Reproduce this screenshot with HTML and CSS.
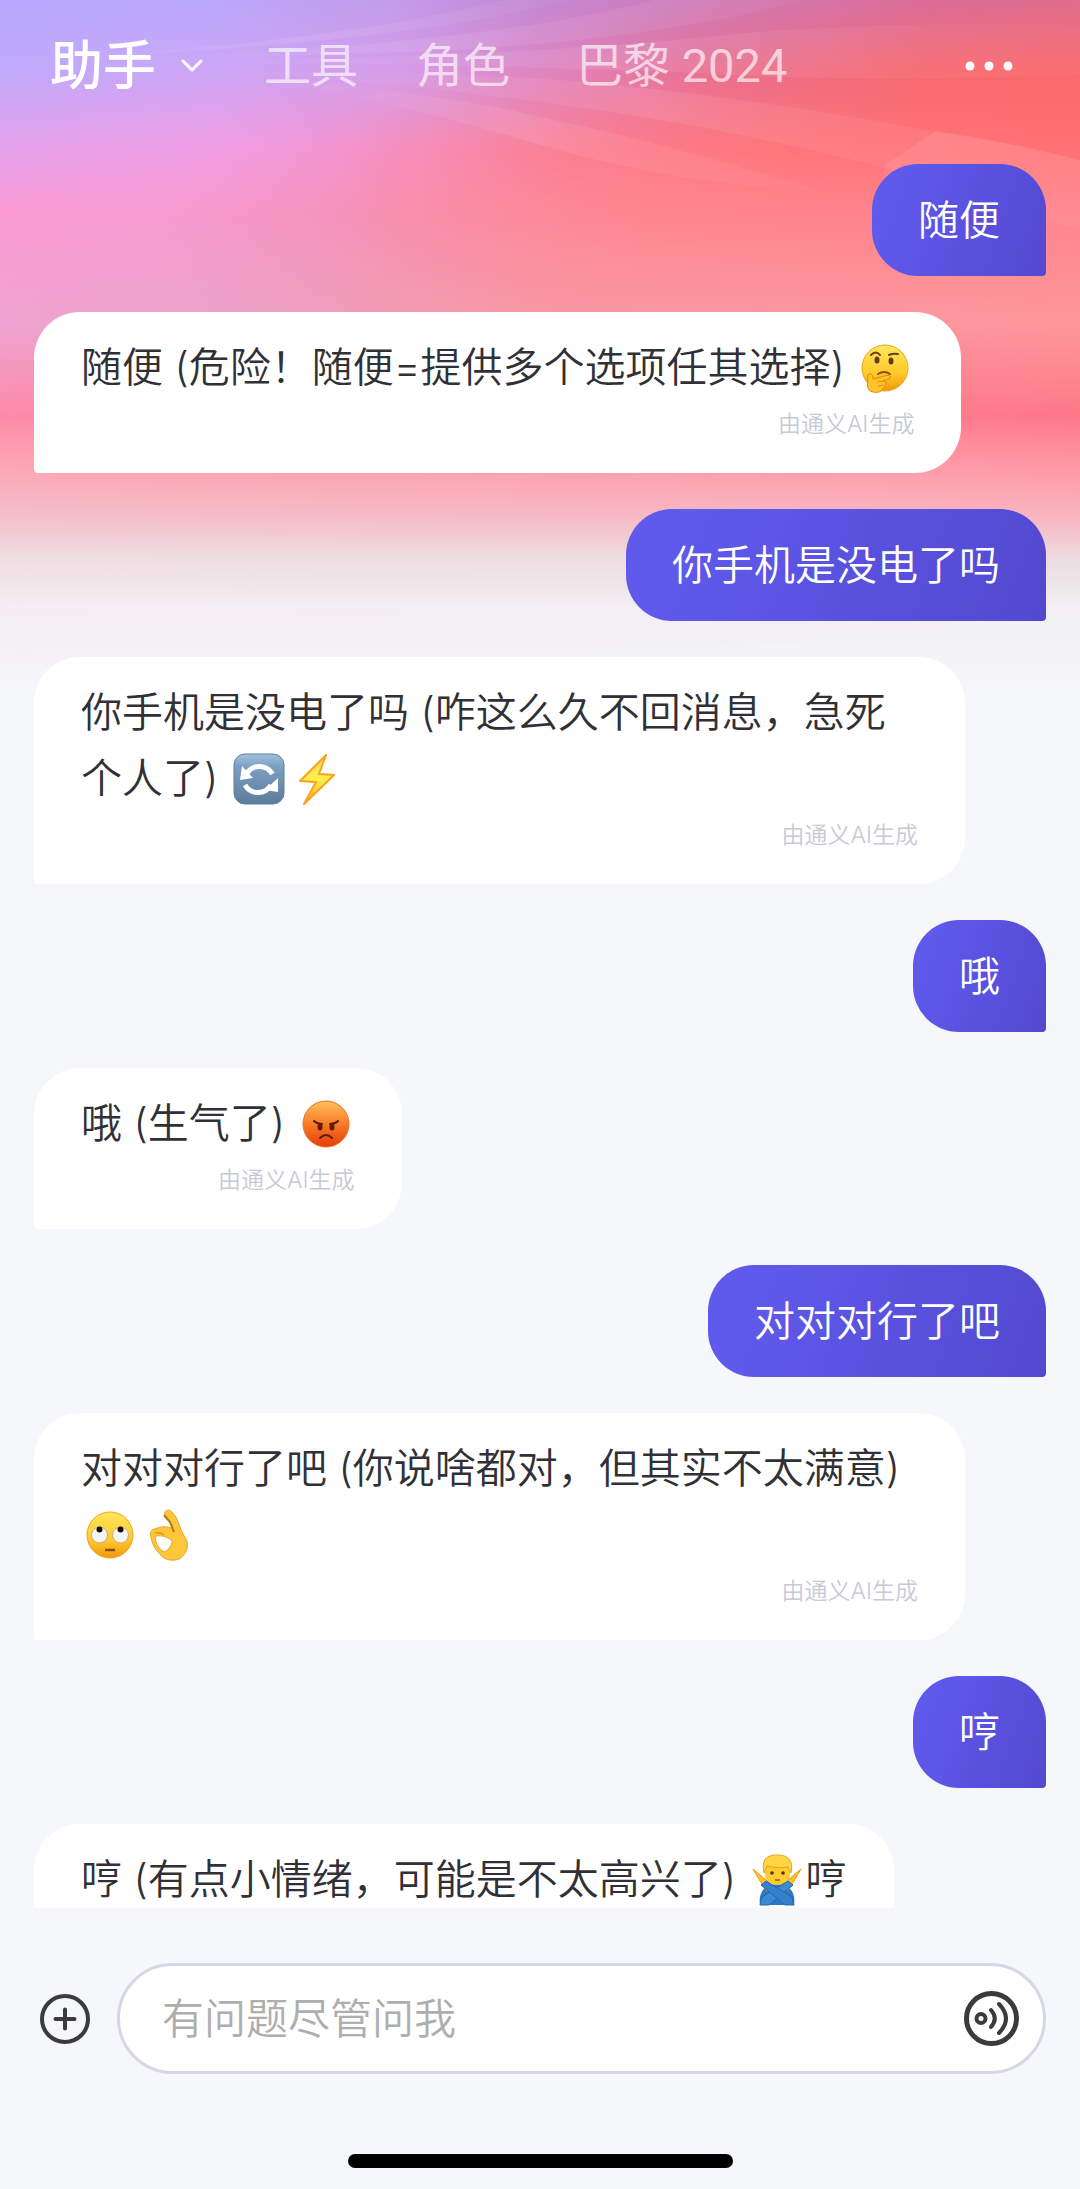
FILE: index.html
```html
<!DOCTYPE html>
<html lang="zh-CN">
<head>
<meta charset="utf-8">
<meta name="viewport" content="width=device-width, initial-scale=1">
<title>助手</title>
<link rel="stylesheet" href="styles.css">
</head>
<body>
<svg class="backdrop" viewBox="0 0 1080 700" preserveAspectRatio="none" aria-hidden="true">
  <defs>
    <linearGradient id="h0"><stop offset="0" stop-color="#b8aaff"/><stop offset=".2" stop-color="#bba8fb"/><stop offset=".37" stop-color="#c39bea"/><stop offset=".5" stop-color="#c488d4"/><stop offset=".65" stop-color="#cf7cb8"/><stop offset=".85" stop-color="#da6d99"/><stop offset="1" stop-color="#df6d8c"/></linearGradient>
    <linearGradient id="h1"><stop offset="0" stop-color="#c0a9fb"/><stop offset=".2" stop-color="#cca6f7"/><stop offset=".37" stop-color="#d59ce8"/><stop offset=".5" stop-color="#df85c2"/><stop offset=".65" stop-color="#e97092"/><stop offset=".85" stop-color="#f7696f"/><stop offset="1" stop-color="#fb6a6e"/></linearGradient>
    <linearGradient id="h2"><stop offset="0" stop-color="#e4a1ea"/><stop offset=".2" stop-color="#f19de3"/><stop offset=".3" stop-color="#f396d2"/><stop offset=".4" stop-color="#f78cb4"/><stop offset=".52" stop-color="#fb7f92"/><stop offset=".72" stop-color="#ff767b"/><stop offset="1" stop-color="#ff7175"/></linearGradient>
    <linearGradient id="h3"><stop offset="0" stop-color="#fb9bd5"/><stop offset=".15" stop-color="#f79bd2"/><stop offset=".3" stop-color="#f594be"/><stop offset=".42" stop-color="#f98ca4"/><stop offset=".6" stop-color="#ff858e"/><stop offset="1" stop-color="#ff8289"/></linearGradient>
    <linearGradient id="h4"><stop offset="0" stop-color="#f0a3d0"/><stop offset=".2" stop-color="#eba1c9"/><stop offset=".5" stop-color="#f897a2"/><stop offset="1" stop-color="#fe959b"/></linearGradient>
    <linearGradient id="h5"><stop offset="0" stop-color="#fd8ba8"/><stop offset="1" stop-color="#fd7888"/></linearGradient>
    <linearGradient id="h6"><stop offset="0" stop-color="#fda5b4"/><stop offset="1" stop-color="#fe98a4"/></linearGradient>
    <linearGradient id="h7"><stop offset="0" stop-color="#f4bfc9"/><stop offset="1" stop-color="#fab4bf"/></linearGradient>
    <linearGradient id="h8"><stop offset="0" stop-color="#efdfe3"/><stop offset="1" stop-color="#ecdde0"/></linearGradient>
    <linearGradient id="h9"><stop offset="0" stop-color="#f5edf2"/><stop offset="1" stop-color="#f2f0f3"/></linearGradient>
    <linearGradient id="fade" x2="0" y2="1"><stop offset="0" stop-color="#fff" stop-opacity="0"/><stop offset="1" stop-color="#fff"/></linearGradient>
    <linearGradient id="ray"><stop offset="0" stop-color="#fff" stop-opacity="0"/><stop offset=".5" stop-color="#fff" stop-opacity=".09"/><stop offset="1" stop-color="#fff" stop-opacity=".03"/></linearGradient>
    <linearGradient id="fall" x2="0" y2="1"><stop offset="0" stop-color="#fff" stop-opacity=".1"/><stop offset="1" stop-color="#fff" stop-opacity="0"/></linearGradient>
    <mask id="m1" maskUnits="userSpaceOnUse" x="0" y="0" width="1080" height="700"><rect width="1080" height="70" fill="url(#fade)"/><rect y="70" width="1080" height="630" fill="#fff"/></mask>
    <mask id="m2" maskUnits="userSpaceOnUse" x="0" y="0" width="1080" height="700"><rect y="70" width="1080" height="80" fill="url(#fade)"/><rect y="150" width="1080" height="550" fill="#fff"/></mask>
    <mask id="m3" maskUnits="userSpaceOnUse" x="0" y="0" width="1080" height="700"><rect y="150" width="1080" height="60" fill="url(#fade)"/><rect y="210" width="1080" height="490" fill="#fff"/></mask>
    <mask id="m4" maskUnits="userSpaceOnUse" x="0" y="0" width="1080" height="700"><rect y="210" width="1080" height="100" fill="url(#fade)"/><rect y="310" width="1080" height="390" fill="#fff"/></mask>
    <mask id="m5" maskUnits="userSpaceOnUse" x="0" y="0" width="1080" height="700"><rect y="330" width="1080" height="85" fill="url(#fade)"/><rect y="415" width="1080" height="285" fill="#fff"/></mask>
    <mask id="m6" maskUnits="userSpaceOnUse" x="0" y="0" width="1080" height="700"><rect y="415" width="1080" height="50" fill="url(#fade)"/><rect y="465" width="1080" height="235" fill="#fff"/></mask>
    <mask id="m7" maskUnits="userSpaceOnUse" x="0" y="0" width="1080" height="700"><rect y="465" width="1080" height="50" fill="url(#fade)"/><rect y="515" width="1080" height="185" fill="#fff"/></mask>
    <mask id="m8" maskUnits="userSpaceOnUse" x="0" y="0" width="1080" height="700"><rect y="515" width="1080" height="45" fill="url(#fade)"/><rect y="560" width="1080" height="140" fill="#fff"/></mask>
    <mask id="m9" maskUnits="userSpaceOnUse" x="0" y="0" width="1080" height="700"><rect y="560" width="1080" height="50" fill="url(#fade)"/><rect y="610" width="1080" height="90" fill="#fff"/></mask>
    <mask id="m10" maskUnits="userSpaceOnUse" x="0" y="0" width="1080" height="700"><rect y="610" width="1080" height="90" fill="url(#fade)"/></mask>
  </defs>
  <rect width="1080" height="700" fill="url(#h0)"/>
  <rect width="1080" height="700" fill="url(#h1)" mask="url(#m1)"/>
  <rect width="1080" height="700" fill="url(#h2)" mask="url(#m2)"/>
  <rect width="1080" height="700" fill="url(#h3)" mask="url(#m3)"/>
  <rect width="1080" height="700" fill="url(#h4)" mask="url(#m4)"/>
  <rect width="1080" height="700" fill="url(#h5)" mask="url(#m5)"/>
  <rect width="1080" height="700" fill="url(#h6)" mask="url(#m6)"/>
  <rect width="1080" height="700" fill="url(#h7)" mask="url(#m7)"/>
  <rect width="1080" height="700" fill="url(#h8)" mask="url(#m8)"/>
  <rect width="1080" height="700" fill="url(#h9)" mask="url(#m9)"/>
  <rect width="1080" height="700" fill="#f5f7fb" mask="url(#m10)"/>
  <g fill="url(#ray)">
    <path d="M0 58Q300 50 505 0H570Q400 45 0 62Z"/>
    <path d="M120 58Q480 46 655 0H805Q640 44 400 52Q240 58 120 58Z"/>
    <path d="M160 62Q520 58 746 33Q900 21 1080 25V74Q860 84 678 72Q400 62 160 62Z"/>
    <path d="M220 72Q480 70 626 86Q780 102 936 132Q1010 142 1080 160V230Q960 190 867 163Q700 122 540 102Q380 80 220 72Z"/>
    <path d="M240 78Q420 88 540 117Q680 146 815 190Q680 185 540 145Q380 96 240 78Z"/>
  </g>
  <path d="M936 131Q1010 142 1080 160V260H870L885 165Z" fill="url(#fall)"/>
</svg>

<header class="topbar">
  <button class="current" type="button">助手
    <svg class="chevron" viewBox="0 0 24 16" aria-hidden="true"><path d="M3 3l9 9 9-9"/></svg>
  </button>
  <nav class="tabs">
    <a class="tab" href="#tools">工具</a>
    <a class="tab" href="#roles">角色</a>
    <a class="tab tab-event" href="#paris">巴黎 2024</a>
  </nav>
  <button class="more" type="button" aria-label="更多">
    <svg viewBox="0 0 48 12" aria-hidden="true"><circle cx="5" cy="6" r="4.500"/><circle cx="24" cy="6" r="4.500"/><circle cx="43" cy="6" r="4.500"/></svg>
  </button>
</header>

<main class="chat">
  <div class="bubble user">随便</div>
  <div class="bubble ai">
    <p>随便 (危险！随便=提供多个选项任其选择) <svg class="emoji" viewBox="0 0 56 52" role="img" aria-label="思考">
      <defs>
        <linearGradient id="skin" x2="0" y2="1"><stop offset="0" stop-color="#ffe65c"/><stop offset=".6" stop-color="#ffcb2b"/><stop offset="1" stop-color="#f3970c"/></linearGradient>
      </defs>
      <circle cx="28" cy="26" r="23" fill="url(#skin)" stroke="#eda21c"/>
      <path d="M14 13q5-5 9 0M32 13q4-2 9-1" fill="none" stroke="#6b3e0c" stroke-width="2" stroke-linecap="round"/>
      <ellipse cx="20" cy="18" rx="2.5" ry="3.5" fill="#623a10"/><ellipse cx="34" cy="19" rx="2.5" ry="3.5" fill="#623a10"/>
      <path d="M21 32q6-4 12 0" fill="none" stroke="#8a4f10" stroke-width="2" stroke-linecap="round"/>
      <path d="M12 32c3-1 4 2 4 5 7-1 13-5 17-3 2 2-4 4-7 5 4 0 3 4 1 6-2 5-6 6-11 5-6-1-6-7-5-11 0-3-1-6 1-7z" fill="#ffc42c" stroke="#df8808"/>
      <path d="M20 40l7-1M21 44l6-1" stroke="#e18b0a"/>
    </svg></p>
    <small>由通义AI生成</small>
  </div>
  <div class="bubble user">你手机是没电了吗</div>
  <div class="bubble ai">
    <p>你手机是没电了吗 (咋这么久不回消息，急死个人了) <svg class="emoji" viewBox="0 0 56 52" role="img" aria-label="刷新">
      <defs><linearGradient id="key" x2="0" y2="1"><stop offset="0" stop-color="#a3c3df"/><stop offset=".25" stop-color="#7ba0c2"/><stop offset="1" stop-color="#5e7c9b"/></linearGradient></defs>
      <rect x="3" y="1" width="50" height="50" rx="11" fill="url(#key)" stroke="#5d7f9f"/>
      <path d="M16 20A15 15 0 0 1 41.500 21M40 32A15 15 0 0 1 14 32" fill="none" stroke="#fff" stroke-width="5"/>
      <path d="M11 13L9 27l13-2zM47 25v14l-13-2z" fill="#fff"/>
    </svg><svg class="emoji" viewBox="0 0 56 52" role="img" aria-label="闪电">
      <defs><linearGradient id="bolt" x2="0" y2="1"><stop offset="0" stop-color="#ffd75a"/><stop offset=".5" stop-color="#fff04a"/><stop offset="1" stop-color="#ffb116"/></linearGradient></defs>
      <path d="M37 2L11 28l16 1-12 22 30-29-15-1z" fill="url(#bolt)" stroke="#ffa01c" stroke-width="2" stroke-linejoin="round"/>
    </svg></p>
    <small>由通义AI生成</small>
  </div>
  <div class="bubble user">哦</div>
  <div class="bubble ai">
    <p>哦 (生气了) <svg class="emoji" viewBox="0 0 56 52" role="img" aria-label="生气">
      <defs><linearGradient id="anger" x2="0" y2="1"><stop offset="0" stop-color="#ffc25a"/><stop offset=".45" stop-color="#f8822d"/><stop offset="1" stop-color="#e83c05"/></linearGradient></defs>
      <circle cx="28" cy="26" r="23" fill="url(#anger)" stroke="#ec6a24"/>
      <path d="M16 23q3 3 8 3M40 23q-3 3-8 3M22 40q6-6 12 0" fill="none" stroke="#5e1d08" stroke-width="2" stroke-linecap="round"/>
      <ellipse cx="22" cy="29" rx="2.500" ry="3.500" fill="#5e1d08"/><ellipse cx="34" cy="29" rx="2.500" ry="3.500" fill="#5e1d08"/>
    </svg></p>
    <small>由通义AI生成</small>
  </div>
  <div class="bubble user">对对对行了吧</div>
  <div class="bubble ai">
    <p>对对对行了吧 (你说啥都对，但其实不太满意) <svg class="emoji" viewBox="0 0 56 52" role="img" aria-label="翻白眼">
      <circle cx="28" cy="26" r="23" fill="url(#skin)" stroke="#eda21c"/>
      <circle cx="17.500" cy="26" r="8" fill="#f4f5f6" stroke="#c5ad7d"/><circle cx="38.500" cy="26" r="8" fill="#f4f5f6" stroke="#c5ad7d"/>
      <circle cx="17.500" cy="20.500" r="3" fill="#160d02"/><circle cx="38.500" cy="20.500" r="3" fill="#160d02"/>
      <path d="M23 41h10" stroke="#8a4f10" stroke-width="2.500"/>
    </svg><svg class="emoji" viewBox="0 0 56 52" role="img" aria-label="好的">
      <path fill-rule="evenodd" d="M25 7c-2-5 4-8 7-4l4 5 6 15 5 9c2 9-3 15-8 18-8 3-16 0-19-5-4-3-8-10-9-17-2-5 1-8 4-8 6-3 13-3 18 0l-1-5-5-5c-2-1-2-2-2-3zM16 27c-2 6 3 13 8 16 4-1 8-7 8-11-4-4-10-6-16-5z" fill="#fdc63b" stroke="#eda526" stroke-linejoin="round"/>
      <path d="M24 6l6 7 4 10" fill="none" stroke="#b9740d" stroke-width="2"/><path d="M15 24q6-1 9 2" fill="none" stroke="#e09420" stroke-width="1.500"/>
    </svg></p>
    <small>由通义AI生成</small>
  </div>
  <div class="bubble user">哼</div>
  <div class="bubble ai">
    <p>哼 (有点小情绪，可能是不太高兴了) <svg class="emoji" viewBox="0 0 56 52" role="img" aria-label="拒绝">
      <path d="M11 51c-2-12 4-21 17-21s19 9 17 21z" fill="#2d78c4"/>
      <path d="M4 15l13 11 7 6-6 5-7-10zM52 15L39 26l-7 6 6 5 7-10z" fill="#ffc32b" stroke="#e99b12"/>
      <path d="M16 9h25v11c0 7-6 11-12.500 11S16 27 16 20z" fill="#ffcc30"/>
      <path d="M15 19C12 5 18 1 28 1s17 4 14 18l-3-6q-11 2-21-1z" fill="#ffd545" stroke="#e6a31c"/>
      <circle cx="23" cy="19" r="1.800" fill="#57350c"/><circle cx="34" cy="19" r="1.800" fill="#57350c"/><path d="M26 26h5" stroke="#9c5d10" stroke-width="1.500"/>
      <path d="M39 27l5 4-24 20h-9l2-8z" fill="#3b8ad6" stroke="#2467ab"/>
      <path d="M17 27l-5 4 24 20h9l-2-8z" fill="#357fcb" stroke="#2467ab"/>
    </svg>哼</p>
  </div>
</main>

<footer class="dock">
  <form class="composer">
    <button class="icon-button" type="button" aria-label="添加">
      <svg class="icon-plus" viewBox="0 0 50 50" aria-hidden="true"><circle cx="25" cy="25" r="23"/><path d="M25 15.500v19M15.500 25h19"/></svg>
    </button>
    <div class="field">
      <input type="text" placeholder="有问题尽管问我" aria-label="有问题尽管问我">
      <button class="icon-button" type="button" aria-label="语音通话">
        <svg class="icon-voice" viewBox="0 0 55 55" aria-hidden="true"><circle cx="27.500" cy="27.500" r="25" stroke-width="5"/><circle cx="17" cy="27.500" r="4.500"/><path d="M27 19q7.500 8.500 0 17M35 13q14 14.500 0 29"/></svg>
      </button>
    </div>
  </form>
  <div class="home-indicator"></div>
</footer>
</body>
</html>
```
FILE: styles.css
```css
* {
  box-sizing: border-box;
}

body {
  margin: 0;
  height: 100vh;
  display: flex;
  flex-direction: column;
  background: #f5f7fb;
  color: #303036;
  font-family: Inter, "Noto Sans CJK SC", sans-serif;
  font-size: 41px;
  font-weight: 350;
  line-height: 66px;
}

button,
input {
  font: inherit;
  color: inherit;
  border: 0;
  padding: 0;
  background: none;
}

svg {
  display: block;
}

.backdrop {
  position: absolute;
  top: 0;
  left: 0;
  z-index: -1;
  width: 100%;
  height: 700px;
}

/* Top bar */
.topbar {
  flex: none;
  display: flex;
  align-items: center;
  height: 132px;
  padding: 0 67px 0 50px;
  color: #fff;
}

.current {
  display: flex;
  align-items: center;
  gap: 24px;
  font-size: 53px;
  font-weight: 500;
}

.chevron {
  width: 24px;
  height: 16px;
  fill: none;
  stroke: #fff;
  stroke-width: 3;
  stroke-linecap: round;
  stroke-linejoin: round;
}

.tabs {
  display: flex;
  gap: 58px;
  margin-left: 60px;
}

.tab {
  color: rgba(255, 255, 255, 0.68);
  font-family: Roboto, "Noto Sans CJK SC", sans-serif;
  font-size: 47px;
  font-weight: 400;
  text-decoration: none;
  white-space: nowrap;
}

.tab-event {
  padding-left: 8px;
}

.more {
  margin-left: auto;
}

.more svg {
  width: 48px;
  height: 12px;
  fill: #fff;
}

/* Conversation */
.chat {
  flex: 1;
  min-height: 0;
  display: flex;
  flex-direction: column;
  gap: 36px;
  padding: 32px 34px 0;
  overflow-y: auto;
  scrollbar-width: none;
}

.bubble {
  flex: none;
  padding: 23px 46px;
}

.user {
  align-self: flex-end;
  border-radius: 46px 46px 4px 46px;
  background: linear-gradient(110deg, #5f59ec 15%, #5349cf);
  color: #fff;
}

.ai {
  align-self: flex-start;
  max-width: 92%;
  padding: 22px 47px 35px;
  border-radius: 46px 46px 46px 4px;
  background: #fff;
}

.ai p {
  margin: 0;
}

.ai small {
  display: block;
  margin-top: 10px;
  color: #c8c9d6;
  font-size: 23px;
  line-height: 28px;
  text-align: right;
}

.emoji {
  display: inline-block;
  width: 58px;
  height: 52px;
  vertical-align: -12px;
}

/* Composer */
.dock {
  flex: none;
  padding: 55px 34px 21px;
}

.composer {
  display: flex;
  align-items: center;
  gap: 27px;
  margin-left: 6px;
}

.icon-button svg {
  fill: none;
  stroke: #3b3b3d;
  stroke-width: 4;
  stroke-linecap: round;
}

.icon-plus {
  width: 50px;
  height: 50px;
}

.icon-voice {
  width: 55px;
  height: 55px;
}

.field {
  flex: 1;
  display: flex;
  align-items: center;
  height: 111px;
  padding: 0 24px 0 42px;
  border: 3px solid #d6d6e6;
  border-radius: 56px;
  background: #fff;
}

.field input {
  flex: 1;
  min-width: 0;
  outline: 0;
  font-size: 42px;
}

.field input::placeholder {
  color: #aeaeae;
  opacity: 1;
}

.home-indicator {
  width: 385px;
  height: 14px;
  margin: 80px auto 0;
  border-radius: 7px;
  background: #000;
}
```
